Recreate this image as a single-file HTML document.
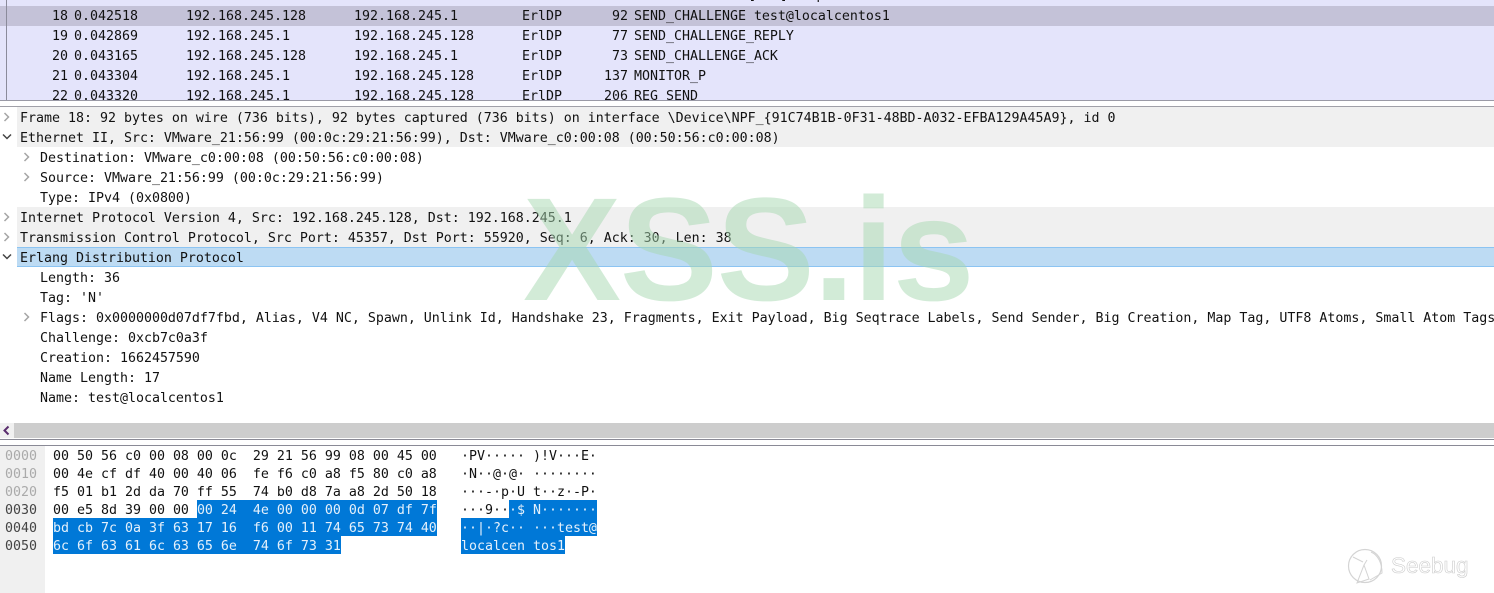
<!DOCTYPE html>
<html><head><meta charset="utf-8"><style>
html,body{margin:0;padding:0;background:#fff}
body{width:1494px;height:593px;position:relative;overflow:hidden;font-family:"DejaVu Sans Mono","Liberation Mono",monospace;font-size:13.29px;color:#111}
.a{position:absolute;white-space:pre}
.t{position:absolute;white-space:pre;line-height:20px;height:20px;margin-top:2px}
.h{position:absolute;white-space:pre;line-height:18px;height:18px;margin-top:2px}
.b{position:absolute}
.s{color:#e4f0fb}
svg{position:absolute}
</style></head><body>
<div class="b" style="left:0;top:0;width:1494px;height:100px;background:#e4e4fb"></div>
<div class="b" style="left:0;top:6px;width:1494px;height:20px;background:#c4c2d8"></div>
<div class="b" style="left:6px;top:0;width:1px;height:100px;background:#8b8b9b"></div>
<div class="b" style="left:0;top:100px;width:1494px;height:1px;background:#9a9aa6"></div>
<div class="b" style="left:0;top:106px;width:1494px;height:1px;background:#a0a0a8"></div>

<div class="b" style="left:0;top:-1px;width:1494px;height:101px">
<div class="t" style="left:748px;top:-15px">[ACK] Seq=6 Ack=30</div>
<div class="t" style="left:52px;top:6px">18</div><div class="t" style="left:74px;top:6px">0.042518</div><div class="t" style="left:186px;top:6px">192.168.245.128</div><div class="t" style="left:354px;top:6px">192.168.245.1</div><div class="t" style="left:522px;top:6px">ErlDP</div><div class="t" style="left:612px;top:6px">92</div><div class="t" style="left:634px;top:6px">SEND_CHALLENGE test@localcentos1</div>
<div class="t" style="left:52px;top:26px">19</div><div class="t" style="left:74px;top:26px">0.042869</div><div class="t" style="left:186px;top:26px">192.168.245.1</div><div class="t" style="left:354px;top:26px">192.168.245.128</div><div class="t" style="left:522px;top:26px">ErlDP</div><div class="t" style="left:612px;top:26px">77</div><div class="t" style="left:634px;top:26px">SEND_CHALLENGE_REPLY</div>
<div class="t" style="left:52px;top:46px">20</div><div class="t" style="left:74px;top:46px">0.043165</div><div class="t" style="left:186px;top:46px">192.168.245.128</div><div class="t" style="left:354px;top:46px">192.168.245.1</div><div class="t" style="left:522px;top:46px">ErlDP</div><div class="t" style="left:612px;top:46px">73</div><div class="t" style="left:634px;top:46px">SEND_CHALLENGE_ACK</div>
<div class="t" style="left:52px;top:66px">21</div><div class="t" style="left:74px;top:66px">0.043304</div><div class="t" style="left:186px;top:66px">192.168.245.1</div><div class="t" style="left:354px;top:66px">192.168.245.128</div><div class="t" style="left:522px;top:66px">ErlDP</div><div class="t" style="left:604px;top:66px">137</div><div class="t" style="left:634px;top:66px">MONITOR_P</div>
<div class="b" style="left:0;top:85px;width:1494px;height:16px;overflow:hidden">
<div class="t" style="left:52px;top:1px">22</div><div class="t" style="left:74px;top:1px">0.043320</div><div class="t" style="left:186px;top:1px">192.168.245.1</div><div class="t" style="left:354px;top:1px">192.168.245.128</div><div class="t" style="left:522px;top:1px">ErlDP</div><div class="t" style="left:604px;top:1px">206</div><div class="t" style="left:634px;top:1px">REG_SEND</div>
</div>
</div>

<div class="b" style="left:17px;top:107px;width:1477px;height:40px;background:#f0f0f0"></div>
<div class="b" style="left:17px;top:207px;width:1477px;height:40px;background:#f0f0f0"></div>
<div class="b" style="left:17px;top:247px;width:1477px;height:18px;background:#bddbf3;border-top:1px solid #8cc4f2;border-bottom:1px solid #8cc4f2"></div>

<div class="t" style="left:20px;top:107px">Frame 18: 92 bytes on wire (736 bits), 92 bytes captured (736 bits) on interface \Device\NPF_{91C74B1B-0F31-48BD-A032-EFBA129A45A9}, id 0</div>
<div class="t" style="left:20px;top:127px">Ethernet II, Src: VMware_21:56:99 (00:0c:29:21:56:99), Dst: VMware_c0:00:08 (00:50:56:c0:00:08)</div>
<div class="t" style="left:40px;top:147px">Destination: VMware_c0:00:08 (00:50:56:c0:00:08)</div>
<div class="t" style="left:40px;top:167px">Source: VMware_21:56:99 (00:0c:29:21:56:99)</div>
<div class="t" style="left:40px;top:187px">Type: IPv4 (0x0800)</div>
<div class="t" style="left:20px;top:207px">Internet Protocol Version 4, Src: 192.168.245.128, Dst: 192.168.245.1</div>
<div class="t" style="left:20px;top:227px">Transmission Control Protocol, Src Port: 45357, Dst Port: 55920, Seq: 6, Ack: 30, Len: 38</div>
<div class="t" style="left:20px;top:247px">Erlang Distribution Protocol</div>
<div class="t" style="left:40px;top:267px">Length: 36</div>
<div class="t" style="left:40px;top:287px">Tag: 'N'</div>
<div class="t" style="left:40px;top:307px">Flags: 0x0000000d07df7fbd, Alias, V4 NC, Spawn, Unlink Id, Handshake 23, Fragments, Exit Payload, Big Seqtrace Labels, Send Sender, Big Creation, Map Tag, UTF8 Atoms, Small Atom Tags</div>
<div class="t" style="left:40px;top:327px">Challenge: 0xcb7c0a3f</div>
<div class="t" style="left:40px;top:347px">Creation: 1662457590</div>
<div class="t" style="left:40px;top:367px">Name Length: 17</div>
<div class="t" style="left:40px;top:387px">Name: test@localcentos1</div>

<svg width="40" height="330" style="left:0;top:100px" fill="none" stroke-width="1.5">
<path d="M4.5 13L8.5 17L4.5 21" stroke="#a5a5a5"/>
<path d="M3 34.5L7 38.5L11 34.5" stroke="#444"/>
<path d="M24.5 53L28.5 57L24.5 61" stroke="#a5a5a5"/>
<path d="M24.5 73L28.5 77L24.5 81" stroke="#a5a5a5"/>
<path d="M4.5 113L8.5 117L4.5 121" stroke="#a5a5a5"/>
<path d="M4.5 133L8.5 137L4.5 141" stroke="#a5a5a5"/>
<path d="M3 154.5L7 158.5L11 154.5" stroke="#444"/>
<path d="M24.5 213L28.5 217L24.5 221" stroke="#a5a5a5"/>
</svg>

<div class="b" style="left:0;top:423px;width:14px;height:15px;background:#f0f0f0"></div>
<div class="b" style="left:14px;top:423px;width:1480px;height:15px;background:#cdcdcd"></div>
<svg width="14" height="15" style="left:0;top:423px" fill="none"><path d="M8.5 3.5L4.5 7.5L8.5 11.5" stroke="#5a2d6e" stroke-width="2"/></svg>
<div class="b" style="left:0;top:439px;width:1494px;height:1px;background:#8a8a96"></div>
<div class="b" style="left:0;top:445px;width:1494px;height:1px;background:#8a8a96"></div>
<div class="b" style="left:0;top:446px;width:45px;height:147px;background:#f0f0f0"></div>

<div class="b" style="left:197px;top:500px;width:240px;height:18px;background:#0078d7"></div>
<div class="b" style="left:53px;top:518px;width:384px;height:18px;background:#0078d7"></div>
<div class="b" style="left:53px;top:536px;width:288px;height:18px;background:#0078d7"></div>
<div class="b" style="left:509px;top:500px;width:88px;height:18px;background:#0078d7"></div>
<div class="b" style="left:461px;top:518px;width:136px;height:18px;background:#0078d7"></div>
<div class="b" style="left:461px;top:536px;width:104px;height:18px;background:#0078d7"></div>

<div class="h" style="left:5px;top:446px;color:#aaa">0000</div>
<div class="h" style="left:5px;top:464px;color:#aaa">0010</div>
<div class="h" style="left:5px;top:482px;color:#aaa">0020</div>
<div class="h" style="left:5px;top:500px;color:#444">0030</div>
<div class="h" style="left:5px;top:518px;color:#444">0040</div>
<div class="h" style="left:5px;top:536px;color:#444">0050</div>

<div class="h" style="left:53px;top:446px">00 50 56 c0 00 08 00 0c  29 21 56 99 08 00 45 00</div>
<div class="h" style="left:53px;top:464px">00 4e cf df 40 00 40 06  fe f6 c0 a8 f5 80 c0 a8</div>
<div class="h" style="left:53px;top:482px">f5 01 b1 2d da 70 ff 55  74 b0 d8 7a a8 2d 50 18</div>
<div class="h" style="left:53px;top:500px">00 e5 8d 39 00 00 <span class="s">00 24  4e 00 00 00 0d 07 df 7f</span></div>
<div class="h s" style="left:53px;top:518px">bd cb 7c 0a 3f 63 17 16  f6 00 11 74 65 73 74 40</div>
<div class="h s" style="left:53px;top:536px">6c 6f 63 61 6c 63 65 6e  74 6f 73 31</div>

<div class="h" style="left:461px;top:446px">·PV····· )!V···E·</div>
<div class="h" style="left:461px;top:464px">·N··@·@· ········</div>
<div class="h" style="left:461px;top:482px">···-·p·U t··z·-P·</div>
<div class="h" style="left:461px;top:500px">···9··<span class="s">·$ N·······</span></div>
<div class="h s" style="left:461px;top:518px">··|·?c·· ···test@</div>
<div class="h s" style="left:461px;top:536px">localcen tos1</div>

<div class="a" style="left:523px;top:165px;font-family:'Liberation Sans',sans-serif;font-weight:700;font-size:147px;line-height:170px;letter-spacing:-1.2px;color:rgba(165,215,175,.5)">XSS.is</div>

<svg width="130" height="50" style="left:1345px;top:543px" fill="none" stroke="#d4d4d4" stroke-width="1.2">
<circle cx="20" cy="23" r="16.5"/>
<path d="M8 14L18 19M22 17L19 22L12 40L24 36L19 22" stroke-width="1"/>
<path d="M26 9C33 12 37 20 37 30L25 37" stroke-width="1"/>
<text x="46" y="30" font-family="'Liberation Sans',sans-serif" font-size="22.5" fill="#fff" stroke="#cdcdcd" stroke-width=".6">Seebug</text>
</svg>
</body></html>
